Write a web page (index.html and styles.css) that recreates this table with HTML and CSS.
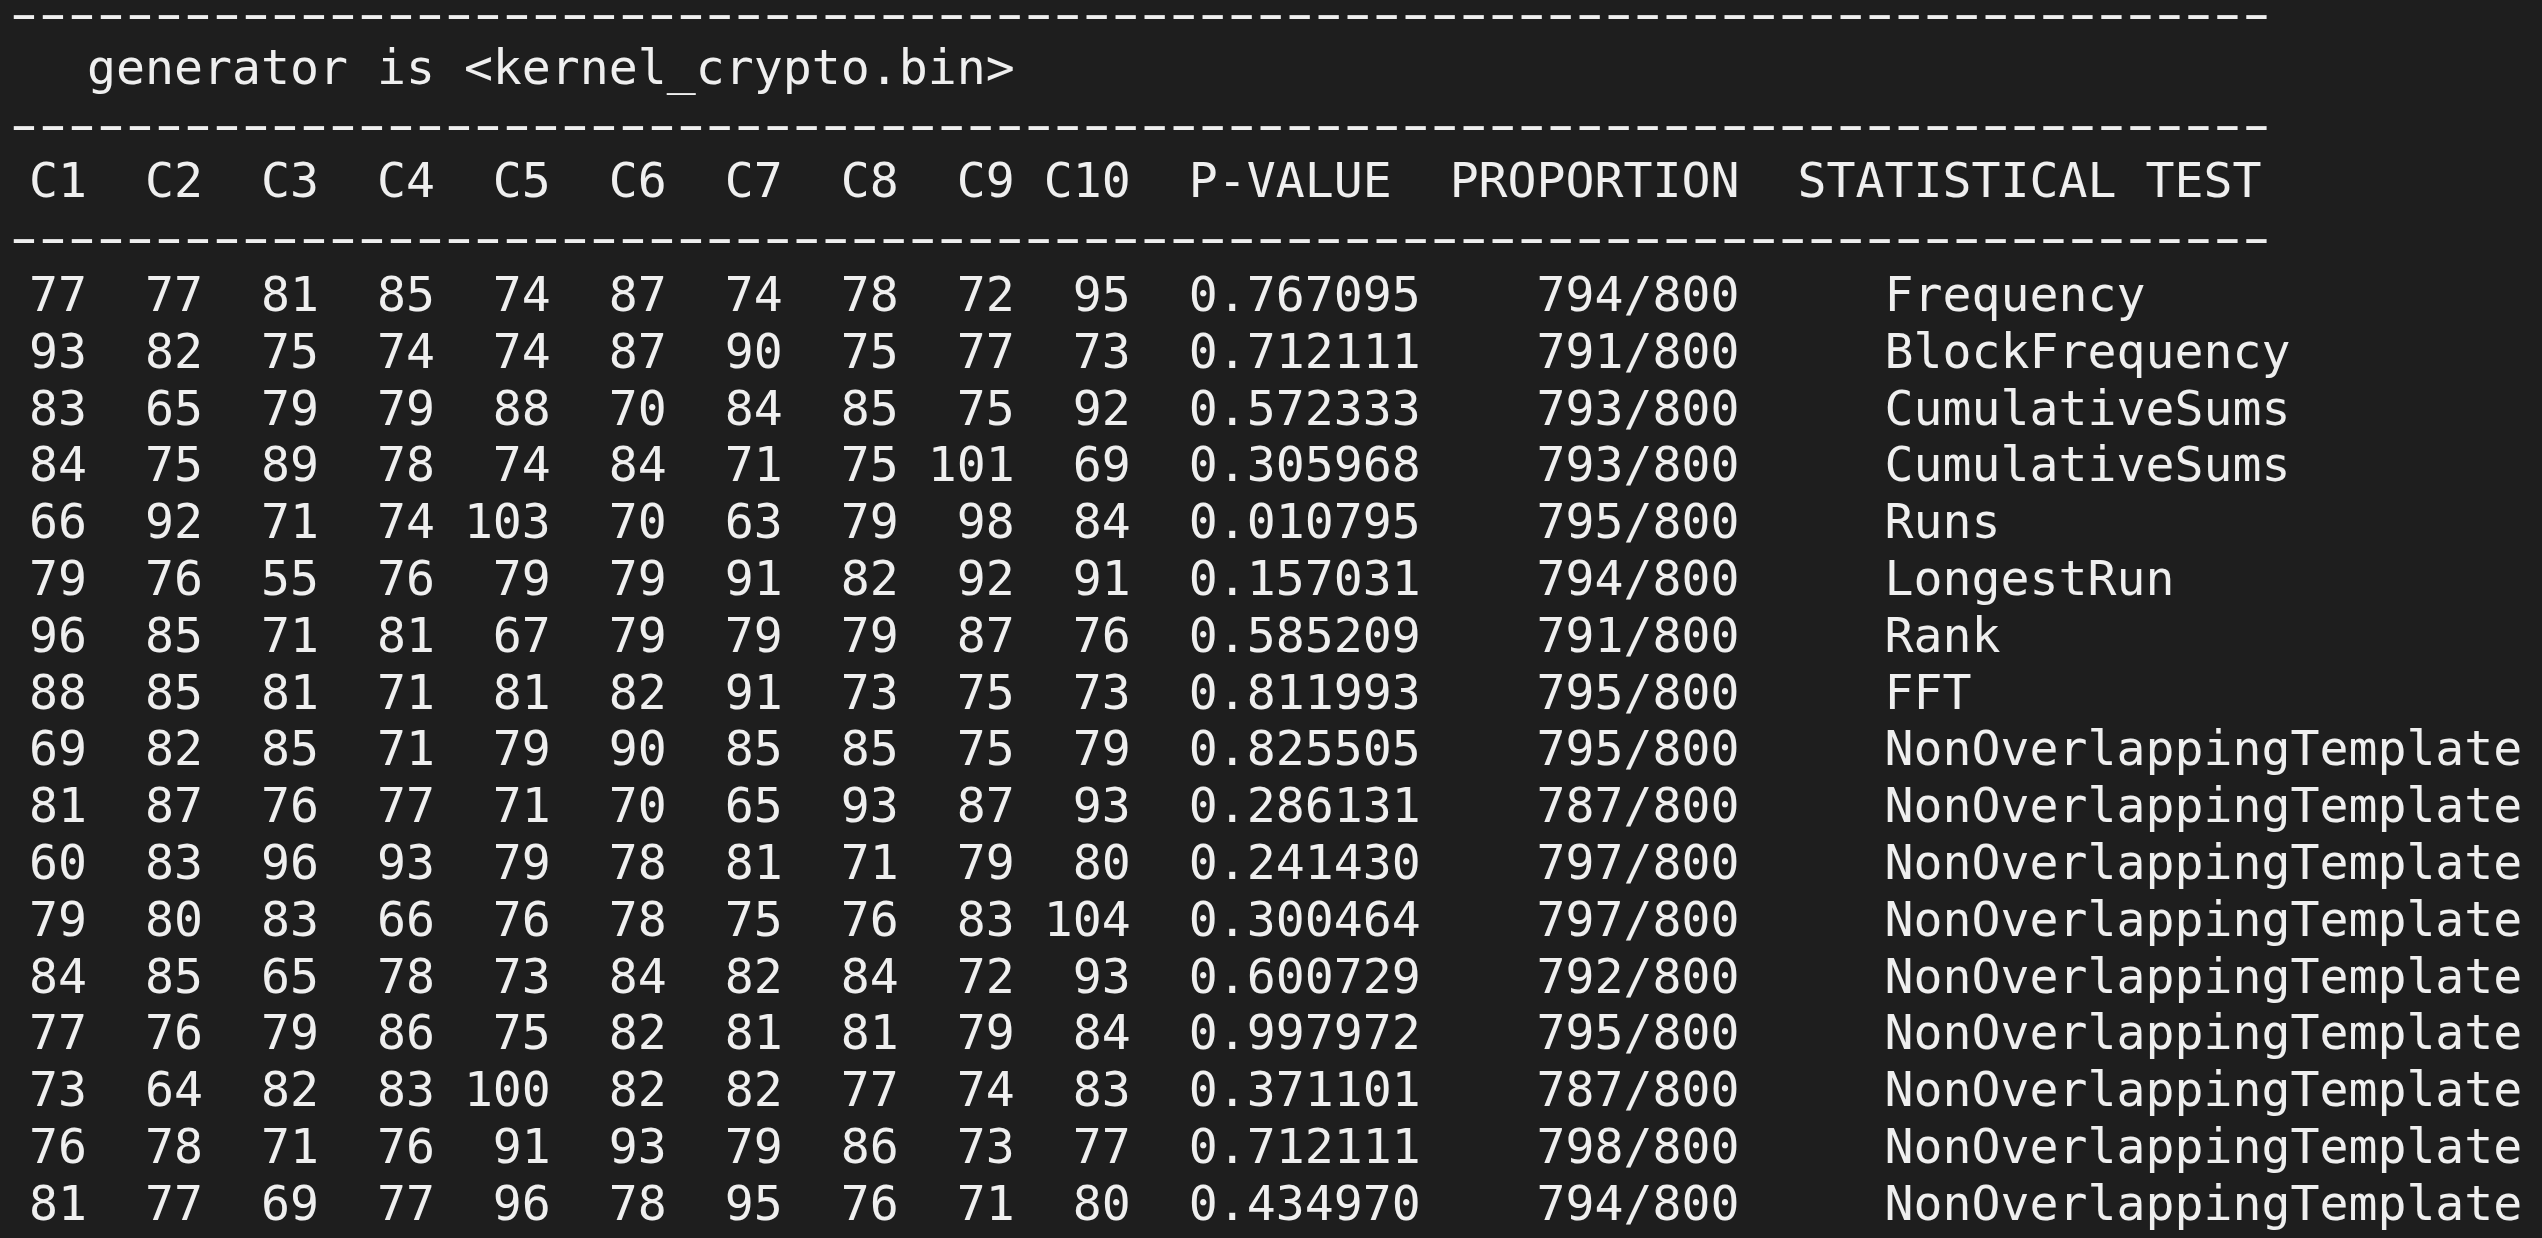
FILE: index.html
```
<!DOCTYPE html>
<html lang="en">
<head>
<meta charset="utf-8">
<title>finalAnalysisReport</title>
<link rel="stylesheet" href="styles.css">
</head>
<body>
<div class="terminal">
<div class="line rule rule-top">------------------------------------------------------------------------------</div>
<div class="line">   generator is &lt;kernel_crypto.bin&gt;</div>
<div class="line rule">------------------------------------------------------------------------------</div>
<div class="line head"> C1  C2  C3  C4  C5  C6  C7  C8  C9 C10  P-VALUE  PROPORTION  STATISTICAL TEST</div>
<div class="line rule">------------------------------------------------------------------------------</div>
<div class="line"> 77  77  81  85  74  87  74  78  72  95  0.767095    794/800     Frequency</div>
<div class="line"> 93  82  75  74  74  87  90  75  77  73  0.712111    791/800     BlockFrequency</div>
<div class="line"> 83  65  79  79  88  70  84  85  75  92  0.572333    793/800     CumulativeSums</div>
<div class="line"> 84  75  89  78  74  84  71  75 101  69  0.305968    793/800     CumulativeSums</div>
<div class="line"> 66  92  71  74 103  70  63  79  98  84  0.010795    795/800     Runs</div>
<div class="line"> 79  76  55  76  79  79  91  82  92  91  0.157031    794/800     LongestRun</div>
<div class="line"> 96  85  71  81  67  79  79  79  87  76  0.585209    791/800     Rank</div>
<div class="line"> 88  85  81  71  81  82  91  73  75  73  0.811993    795/800     FFT</div>
<div class="line"> 69  82  85  71  79  90  85  85  75  79  0.825505    795/800     NonOverlappingTemplate</div>
<div class="line"> 81  87  76  77  71  70  65  93  87  93  0.286131    787/800     NonOverlappingTemplate</div>
<div class="line"> 60  83  96  93  79  78  81  71  79  80  0.241430    797/800     NonOverlappingTemplate</div>
<div class="line"> 79  80  83  66  76  78  75  76  83 104  0.300464    797/800     NonOverlappingTemplate</div>
<div class="line"> 84  85  65  78  73  84  82  84  72  93  0.600729    792/800     NonOverlappingTemplate</div>
<div class="line"> 77  76  79  86  75  82  81  81  79  84  0.997972    795/800     NonOverlappingTemplate</div>
<div class="line"> 73  64  82  83 100  82  82  77  74  83  0.371101    787/800     NonOverlappingTemplate</div>
<div class="line"> 76  78  71  76  91  93  79  86  73  77  0.712111    798/800     NonOverlappingTemplate</div>
<div class="line"> 81  77  69  77  96  78  95  76  71  80  0.434970    794/800     NonOverlappingTemplate</div>
</div>
</body>
</html>
```

FILE: styles.css
```
html, body {
  margin: 0;
  padding: 0;
  background: #1e1e1e;
  height: 100%;
  overflow: hidden;
}

.terminal {
  font-family: "DejaVu Sans Mono", "Liberation Mono", monospace;
  font-size: 48.17px;
  line-height: 56.8px;
  color: #efefef;
}

.line {
  white-space: pre;
  height: 56.8px;
}

/* terminal font draws long dashes: widen each hyphen while keeping the 29px cell pitch */
.rule {
  width: fit-content;
  letter-spacing: -11.42px;
  transform-origin: 0 50%;
  transform: scaleX(1.65);
}

.rule-top {
  height: 38.8px;
  line-height: 26px;
}
```
